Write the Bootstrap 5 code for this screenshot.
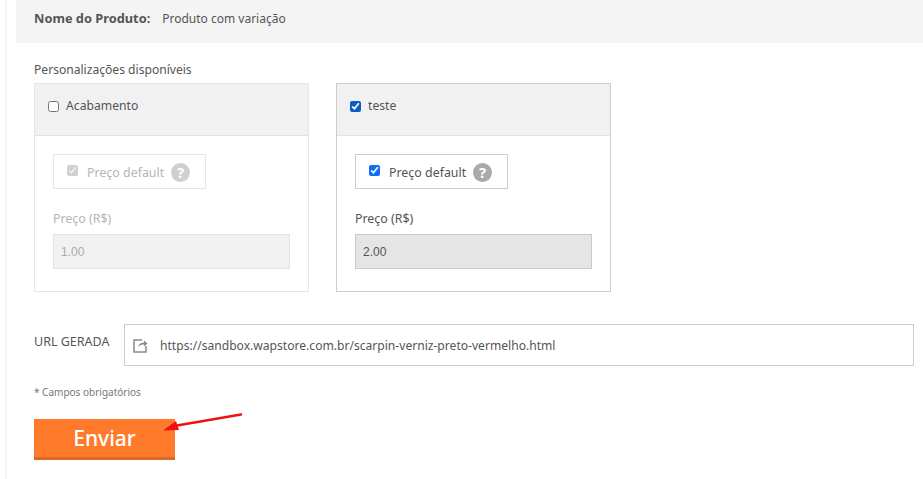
<!DOCTYPE html>
<html lang="pt-BR">
<head>
  <meta charset="UTF-8">
  <meta name="viewport" content="width=device-width, initial-scale=1.0">
  <title>Produto com variação</title>
  <link href="https://cdn.jsdelivr.net/npm/bootstrap@5.3.0/dist/css/bootstrap.min.css" rel="stylesheet">
  <style>
    body { font-family: "Noto Sans", "Open Sans", sans-serif; font-size: 12px; color: #555; background: #fff; overflow: hidden; }
    .page-wrap { margin-left: 5px; padding-left: 9px; border-left: 2px solid #f3f3f3; height: 479px; }
    .product-bar { background: #f4f4f4; height: 43px; padding: 0 0 6px 18px; }
    .product-bar strong { font-size: 12.8px; color: #555; margin-right: 12px; }
    .form-area { padding-left: 18px; padding-right: 9px; }
    .custom-title { margin-top: 18px; height: 22px; line-height: 17px; font-size: 12.1px; }
    .option-list { gap: 27px; }
    .option-box { width: 275px; height: 209px; border: 1px solid #ccc; }
    .option-box.off { border-color: #e6e6e6; }
    .option-head { height: 52px; background: #f1f1f1; border-bottom: 1px solid #e2e2e2; padding: 0 0 6px 13px; font-size: 12.2px; gap: 7px; }
    .option-head input { width: 11px; height: 11px; margin: 0; accent-color: #0b5fc4; }
    .option-body { padding: 18px 18px 0; }
    .default-box { width: 153px; height: 35px; border: 1px solid #ccc; padding: 4px 0 0 13px; font-size: 12.4px; gap: 9px; }
    .default-box input { width: 11px; height: 11px; margin: 0 0 6px; accent-color: #0d6efd; }
    .help-dot { width: 19px; height: 19px; border-radius: 50%; background: #a9a9a9; color: #fff; font-weight: 700; font-size: 15px; line-height: 19px; text-align: center; margin: -3px 0 0 -2px; }
    .price-label { margin: 21px 0 6px; font-size: 12.4px; line-height: 18px; height: 18px; }
    .price-value { height: 35px; border: 1px solid #c9c9c9; background: #e5e5e5; padding-left: 7px; font-family: "Liberation Sans", sans-serif; line-height: 34px; }
    .option-box.off .default-box { border-color: #e6e6e6; }
    .option-box.off .option-body { color: #b5b5b5; }
    .option-box.off .help-dot { background: #cfcfcf; color: #fff; }
    .option-box.off .price-value { background: #f1f1f1; border-color: #e3e3e3; color: #aaa; }
    .url-row { margin-top: 32px; }
    .url-label { width: 90px; padding-top: 9px; line-height: 18px; font-size: 12.5px; }
    .url-field { height: 42px; border: 1px solid #ccc; padding: 2px 0 0 8px; gap: 12px; font-size: 12.1px; }
    .required-note { margin-top: 19px; height: 14px; font-size: 10px; line-height: 14px; color: #777; }
    .send-btn { margin-top: 20px; width: 141px; height: 41px; background: #ff7a2b; border: 0; border-bottom: 3px solid #d9682a; border-radius: 0; color: #fff; font-size: 21px; font-weight: 500; line-height: 38px; padding: 0; }
    .send-btn:hover { background: #ff7a2b; color: #fff; }
    .note-arrow { position: absolute; left: 159px; top: 410px; }
  </style>
</head>
<body>
  <div class="page-wrap">
    <div class="product-bar d-flex align-items-center">
      <strong>Nome do Produto:</strong>
      <span>Produto com variação</span>
    </div>
    <div class="form-area">
      <div class="custom-title">Personalizações disponíveis</div>
      <div class="option-list d-flex">
        <div class="option-box off">
          <label class="option-head d-flex align-items-center">
            <input type="checkbox"> Acabamento
          </label>
          <div class="option-body">
            <label class="default-box d-flex align-items-center">
              <input type="checkbox" checked disabled> Preço default <span class="help-dot">?</span>
            </label>
            <div class="price-label">Preço (R$)</div>
            <div class="price-value">1.00</div>
          </div>
        </div>
        <div class="option-box">
          <label class="option-head d-flex align-items-center">
            <input type="checkbox" checked> teste
          </label>
          <div class="option-body">
            <label class="default-box d-flex align-items-center">
              <input type="checkbox" checked> Preço default <span class="help-dot">?</span>
            </label>
            <div class="price-label">Preço (R$)</div>
            <div class="price-value">2.00</div>
          </div>
        </div>
      </div>
      <div class="url-row d-flex">
        <div class="url-label">URL GERADA</div>
        <div class="url-field flex-grow-1 d-flex align-items-center">
          <svg width="15" height="14" viewBox="0 0 15 14" fill="none">
            <path d="M9 1H1v12h12V7" stroke="#8a8a8a" stroke-width="1.5"/>
            <path d="M5 8c.5-3 3-4.500 6-4.500V1.500l3.500 3-3.500 3V5.500C9 5.500 6.500 6 5 8z" fill="#8a8a8a"/>
          </svg>
          <span>https://sandbox.wapstore.com.br/scarpin-verniz-preto-vermelho.html</span>
        </div>
      </div>
      <div class="required-note">* Campos obrigatórios</div>
      <button type="button" class="btn send-btn d-block">Enviar</button>
    </div>
  </div>
  <svg class="note-arrow" width="84" height="24" viewBox="0 0 84 24">
    <path d="M82 4.500L18 15.500" stroke="#ee1111" stroke-width="2.500" stroke-linecap="round"/>
    <path d="M4 20.500L17 11l3 9z" fill="#ee1111"/>
  </svg>
</body>
</html>
